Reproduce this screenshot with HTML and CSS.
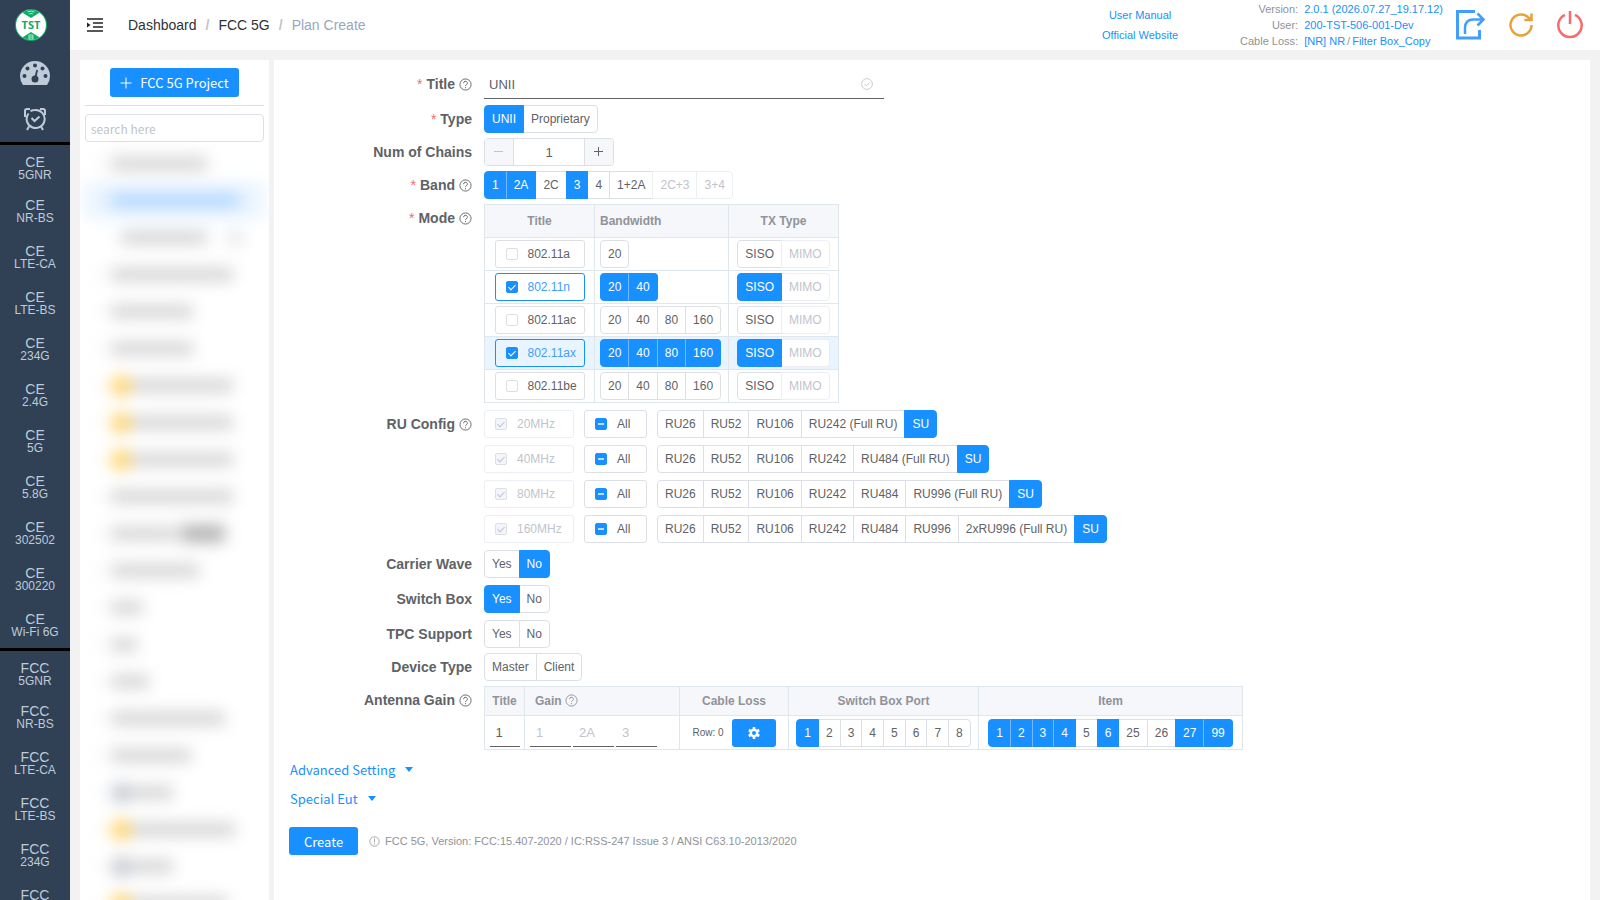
FILE: index.html
```html
<!DOCTYPE html>
<html lang="en">
<head>
<meta charset="utf-8">
<title>Plan Create</title>
<link rel="stylesheet" href="styles.css">
</head>
<body>
<svg class="defs" width="0" height="0" aria-hidden="true">
  <symbol id="help" viewBox="0 0 14 14"><g fill="none" stroke="currentColor"><circle cx="7" cy="7" r="6"/><path d="M5 5.600a2 2 0 1 1 3 1.600q-1 .6-1 1.500M7 9.800v1.200"/></g></symbol>
  <symbol id="info" viewBox="0 0 14 14"><g fill="none" stroke="currentColor"><circle cx="7" cy="7" r="6"/><path d="M7 3.200v5M7 9.400v1.400"/></g></symbol>
</svg>
<div class="app">
  <nav class="side">
    <a class="logo" href="#" aria-label="Home"><svg width="32" height="32" viewBox="0 0 32 32"><defs><clipPath id="disc"><circle cx="16" cy="16" r="15"/></clipPath></defs><circle cx="16" cy="16" r="16" fill="#0fa968"/><circle cx="16" cy="16" r="15" fill="#fff"/><g clip-path="url(#disc)" fill="#0fa968"><path d="M3 0h26l-5 4-8 5-8-5zM3 32h26l-5-4-8-5-8 5z"/></g><path d="M12.500 3q3.500-2 7 0M14 5q2-1 4 0M14 26h4v4h-4zM14 28h4" fill="none" stroke="#b5e6d0"/><text x="16" y="20" text-anchor="middle" class="logo-text">TST</text></svg></a>
    <a class="tool" href="#" aria-label="Dashboard"><svg width="30" height="24" viewBox="0 0 30 24"><path d="M3 24Q0 20 0 15a15 15 0 0 1 30 0q0 5-3 9z" fill="#bfcbd9"/><g fill="#304156"><circle cx="4.500" cy="15" r="2"/><circle cx="7.500" cy="7.500" r="2"/><circle cx="15" cy="4.500" r="2"/><circle cx="22.500" cy="7.500" r="2"/><circle cx="25.500" cy="15" r="2"/><circle cx="15" cy="18" r="3.500"/></g><path d="M15 18l2.200-9" stroke="#304156" stroke-width="1.800"/></svg></a>
    <a class="tool" href="#" aria-label="Schedule"><svg width="22" height="24" viewBox="0 0 22 24" fill="none" stroke="#bfcbd9" stroke-width="2"><path d="M4.500 6.500A9 9 0 1 0 11 3q-2.500 0-4.500 1.200M1 10V4q0-2 2-2h3M16 2h3q2 0 2 2v4M5 19.500l-2 3.500M17 19.500l2 3.500M7.500 11l3 3 5-4.500"/></svg></a>
    <div class="group">
      <a href="#"><b>CE</b>5GNR</a><a href="#"><b>CE</b>NR-BS</a><a href="#"><b>CE</b>LTE-CA</a><a href="#"><b>CE</b>LTE-BS</a><a href="#"><b>CE</b>234G</a><a href="#"><b>CE</b>2.4G</a><a href="#"><b>CE</b>5G</a><a href="#"><b>CE</b>5.8G</a><a href="#"><b>CE</b>302502</a><a href="#"><b>CE</b>300220</a><a href="#"><b>CE</b>Wi-Fi 6G</a>
    </div>
    <div class="group">
      <a href="#"><b>FCC</b>5GNR</a><a href="#"><b>FCC</b>NR-BS</a><a href="#"><b>FCC</b>LTE-CA</a><a href="#"><b>FCC</b>LTE-BS</a><a href="#"><b>FCC</b>234G</a><a href="#"><b>FCC</b></a>
    </div>
  </nav>
  <div class="page">
    <header class="top">
      <button class="plain" type="button" aria-label="Toggle menu"><svg width="16" height="14" viewBox="0 0 16 14"><path d="M0 1h16M6 5h10M6 9h10M0 13h16" stroke="#222" stroke-width="1.500"/><path d="M0 4.500l3.500 2.500L0 9.500z" fill="#222"/></svg></button>
      <div class="crumbs"><a href="#">Dashboard</a><i>/</i><a href="#">FCC 5G</a><i>/</i><span>Plan Create</span></div>
      <div class="docs"><a href="#">User Manual</a><a href="#">Official Website</a></div>
      <dl class="meta"><dt>Version:</dt><dd>2.0.1 (2026.07.27_19.17.12)</dd><dt>User:</dt><dd>200-TST-506-001-Dev</dd><dt>Cable Loss:</dt><dd>[NR] NR<em>/</em>Filter Box_Copy</dd></dl>
      <div class="acts">
        <button class="plain" type="button" aria-label="Share"><svg width="30" height="30" viewBox="0 0 30 30" fill="none" stroke="#409eff"><path d="M19 1.500H1.500v26.500h22V20" stroke-width="3"/><path d="M9 24v-6q0-8.500 8.500-8.500H27M21.500 3.500l6 6-6 6" stroke-width="2.500"/></svg></button>
        <button class="plain" type="button" aria-label="Refresh"><svg width="26" height="26" viewBox="0 0 26 26" fill="none" stroke="#e6a23c" stroke-width="2.500"><path d="M23.500 13A10.500 10.500 0 1 1 20 5.200l3 2M23.500 1.500v6.500h-7"/></svg></button>
        <button class="plain" type="button" aria-label="Log out"><svg width="28" height="30" viewBox="0 0 28 30" fill="none" stroke="#f56c6c" stroke-width="2.500"><path d="M9 4.800A11.700 11.700 0 1 0 19 4.800M14 1v13"/></svg></button>
      </div>
    </header>
    <div class="cols">
      <aside class="tree">
        <button class="primary add" type="button"><svg width="12" height="12" viewBox="0 0 12 12"><path d="M6 .5v11M.5 6h11" stroke="#fff"/></svg>FCC 5G Project</button>
        <div class="find"><input type="text" placeholder="search here" aria-label="search here"></div>
        <ul class="list" aria-hidden="true">
          <li><u></u><s style="width:96px"></s></li>
          <li class="on"><u></u><s style="width:128px"></s></li>
          <li class="sub"><s style="width:86px"></s><q></q></li>
          <li><u></u><s style="width:122px"></s></li>
          <li><u></u><s style="width:82px"></s></li>
          <li><u></u><s style="width:82px"></s></li>
          <li><u></u><em></em><s style="width:102px"></s></li>
          <li><u></u><em></em><s style="width:102px"></s></li>
          <li><u></u><em></em><s style="width:102px"></s></li>
          <li><u></u><s style="width:122px"></s></li>
          <li><u></u><s style="width:66px"></s><s class="dark" style="width:44px"></s></li>
          <li><u></u><s style="width:88px"></s></li>
          <li><u></u><s style="width:32px"></s></li>
          <li><u></u><s style="width:26px"></s></li>
          <li><u></u><s style="width:38px"></s></li>
          <li><u></u><s style="width:114px"></s></li>
          <li><u></u><s style="width:80px"></s></li>
          <li><u></u><em class="slate"></em><s style="width:42px"></s></li>
          <li><u></u><em></em><s style="width:104px"></s></li>
          <li><u></u><em class="slate"></em><s style="width:42px"></s></li>
          <li><u></u><em></em><s style="width:96px"></s></li>
        </ul>
      </aside>
      <main class="main">
        <form class="form">
          <div class="row"><label class="lab req" for="title">Title <svg class="ic"><use href="#help"/></svg></label>
            <div class="title"><input id="title" type="text" value="UNII"><svg width="12" height="12" viewBox="0 0 14 14" fill="none" stroke="#c0c4cc"><circle cx="7" cy="7" r="6.300"/><path d="M4 7l2.300 2.300L10.200 5"/></svg></div></div>
          <div class="row"><span class="lab req" id="l-type">Type</span>
            <div class="opts" role="group" aria-labelledby="l-type"><label><input type="radio" name="type" checked>UNII</label><label><input type="radio" name="type">Proprietary</label></div></div>
          <div class="row"><label class="lab" for="chains">Num of Chains</label>
            <div class="num"><button type="button" disabled aria-label="Decrease"><svg width="10" height="10"><path d="M0 4.500h9" stroke="currentColor"/></svg></button><input id="chains" type="text" value="1"><button type="button" aria-label="Increase"><svg width="10" height="10"><path d="M0 4.500h9M4.500 0v9" stroke="currentColor"/></svg></button></div></div>
          <div class="row"><span class="lab req" id="l-band">Band <svg class="ic"><use href="#help"/></svg></span>
            <div class="opts" role="group" aria-labelledby="l-band"><label><input type="checkbox" checked>1</label><label><input type="checkbox" checked>2A</label><label><input type="checkbox">2C</label><label><input type="checkbox" checked>3</label><label><input type="checkbox">4</label><label><input type="checkbox">1+2A</label><label><input type="checkbox" disabled>2C+3</label><label><input type="checkbox" disabled>3+4</label></div></div>
          <div class="row"><span class="lab req">Mode <svg class="ic"><use href="#help"/></svg></span>
            <table class="grid mode">
              <colgroup><col class="c-side"><col class="c-band"><col class="c-side"></colgroup>
              <thead><tr><th>Title</th><th class="left">Bandwidth</th><th>TX Type</th></tr></thead>
              <tbody>
              <tr><td><label class="box"><input type="checkbox">802.11a</label></td><td class="left"><div class="opts"><label><input type="checkbox">20</label></div></td><td><div class="opts"><label><input type="checkbox">SISO</label><label><input type="checkbox" disabled>MIMO</label></div></td></tr>
              <tr><td><label class="box"><input type="checkbox" checked>802.11n</label></td><td class="left"><div class="opts"><label><input type="checkbox" checked>20</label><label><input type="checkbox" checked>40</label></div></td><td><div class="opts"><label><input type="checkbox" checked>SISO</label><label><input type="checkbox" disabled>MIMO</label></div></td></tr>
              <tr><td><label class="box"><input type="checkbox">802.11ac</label></td><td class="left"><div class="opts"><label><input type="checkbox">20</label><label><input type="checkbox">40</label><label><input type="checkbox">80</label><label><input type="checkbox">160</label></div></td><td><div class="opts"><label><input type="checkbox">SISO</label><label><input type="checkbox" disabled>MIMO</label></div></td></tr>
              <tr class="hot"><td><label class="box"><input type="checkbox" checked>802.11ax</label></td><td class="left"><div class="opts"><label><input type="checkbox" checked>20</label><label><input type="checkbox" checked>40</label><label><input type="checkbox" checked>80</label><label><input type="checkbox" checked>160</label></div></td><td><div class="opts"><label><input type="checkbox" checked>SISO</label><label><input type="checkbox" disabled>MIMO</label></div></td></tr>
              <tr><td><label class="box"><input type="checkbox">802.11be</label></td><td class="left"><div class="opts"><label><input type="checkbox">20</label><label><input type="checkbox">40</label><label><input type="checkbox">80</label><label><input type="checkbox">160</label></div></td><td><div class="opts"><label><input type="checkbox">SISO</label><label><input type="checkbox" disabled>MIMO</label></div></td></tr>
              </tbody>
            </table></div>
          <div class="row ru"><span class="lab">RU Config <svg class="ic"><use href="#help"/></svg></span>
            <div class="stack">
              <div class="line"><label class="box"><input type="checkbox" checked disabled>20MHz</label><label class="box all"><input type="checkbox" class="part">All</label><div class="opts"><label><input type="checkbox">RU26</label><label><input type="checkbox">RU52</label><label><input type="checkbox">RU106</label><label><input type="checkbox">RU242 (Full RU)</label><label><input type="checkbox" checked>SU</label></div></div>
              <div class="line"><label class="box"><input type="checkbox" checked disabled>40MHz</label><label class="box all"><input type="checkbox" class="part">All</label><div class="opts"><label><input type="checkbox">RU26</label><label><input type="checkbox">RU52</label><label><input type="checkbox">RU106</label><label><input type="checkbox">RU242</label><label><input type="checkbox">RU484 (Full RU)</label><label><input type="checkbox" checked>SU</label></div></div>
              <div class="line"><label class="box"><input type="checkbox" checked disabled>80MHz</label><label class="box all"><input type="checkbox" class="part">All</label><div class="opts"><label><input type="checkbox">RU26</label><label><input type="checkbox">RU52</label><label><input type="checkbox">RU106</label><label><input type="checkbox">RU242</label><label><input type="checkbox">RU484</label><label><input type="checkbox">RU996 (Full RU)</label><label><input type="checkbox" checked>SU</label></div></div>
              <div class="line"><label class="box"><input type="checkbox" checked disabled>160MHz</label><label class="box all"><input type="checkbox" class="part">All</label><div class="opts"><label><input type="checkbox">RU26</label><label><input type="checkbox">RU52</label><label><input type="checkbox">RU106</label><label><input type="checkbox">RU242</label><label><input type="checkbox">RU484</label><label><input type="checkbox">RU996</label><label><input type="checkbox">2xRU996 (Full RU)</label><label><input type="checkbox" checked>SU</label></div></div>
            </div></div>
          <div class="row gap"><span class="lab" id="l-cw">Carrier Wave</span>
            <div class="opts" role="group" aria-labelledby="l-cw"><label><input type="radio" name="cw">Yes</label><label><input type="radio" name="cw" checked>No</label></div></div>
          <div class="row gap"><span class="lab" id="l-sb">Switch Box</span>
            <div class="opts" role="group" aria-labelledby="l-sb"><label><input type="radio" name="sb" checked>Yes</label><label><input type="radio" name="sb">No</label></div></div>
          <div class="row"><span class="lab" id="l-tpc">TPC Support</span>
            <div class="opts" role="group" aria-labelledby="l-tpc"><label><input type="radio" name="tpc">Yes</label><label><input type="radio" name="tpc">No</label></div></div>
          <div class="row"><span class="lab" id="l-dt">Device Type</span>
            <div class="opts" role="group" aria-labelledby="l-dt"><label><input type="radio" name="dt">Master</label><label><input type="radio" name="dt">Client</label></div></div>
          <div class="row"><span class="lab">Antenna Gain <svg class="ic"><use href="#help"/></svg></span>
            <table class="grid gain">
              <colgroup><col class="g-title"><col class="g-gain"><col class="g-loss"><col class="g-port"><col class="g-item"></colgroup>
              <thead><tr><th>Title</th><th class="left">Gain <svg class="ic"><use href="#help"/></svg></th><th>Cable Loss</th><th>Switch Box Port</th><th>Item</th></tr></thead>
              <tbody><tr>
                <td><input class="under" type="text" value="1" aria-label="Title"></td>
                <td class="fields"><div class="three"><input class="under" type="text" placeholder="1" aria-label="Gain 1"><input class="under" type="text" placeholder="2A" aria-label="Gain 2A"><input class="under" type="text" placeholder="3" aria-label="Gain 3"></div></td>
                <td><div class="loss">Row: 0<button class="primary gear" type="button" aria-label="Cable loss settings"><svg width="12" height="12" viewBox="0 0 12 12"><path d="M6 0v12M.8 3l10.400 6M.8 9l10.400-6" stroke="#fff" stroke-width="2.600"/><circle cx="6" cy="6" r="3.200" fill="#1890ff" stroke="#fff" stroke-width="2.400"/></svg></button></div></td>
                <td><div class="opts"><label><input type="checkbox" checked>1</label><label><input type="checkbox">2</label><label><input type="checkbox">3</label><label><input type="checkbox">4</label><label><input type="checkbox">5</label><label><input type="checkbox">6</label><label><input type="checkbox">7</label><label><input type="checkbox">8</label></div></td>
                <td><div class="opts"><label><input type="checkbox" checked>1</label><label><input type="checkbox" checked>2</label><label><input type="checkbox" checked>3</label><label><input type="checkbox" checked>4</label><label><input type="checkbox">5</label><label><input type="checkbox" checked>6</label><label><input type="checkbox">25</label><label><input type="checkbox">26</label><label><input type="checkbox" checked>27</label><label><input type="checkbox" checked>99</label></div></td>
              </tr></tbody>
            </table></div>
          <div class="more"><button class="plain" type="button">Advanced Setting<svg width="8" height="5"><path d="M0 0h8L4 5z" fill="currentColor"/></svg></button><button class="plain" type="button">Special Eut<svg width="8" height="5"><path d="M0 0h8L4 5z" fill="currentColor"/></svg></button></div>
          <div class="foot"><button class="primary" type="button">Create</button><svg class="info"><use href="#info"/></svg><span>FCC 5G, Version: FCC:15.407-2020 / IC:RSS-247 Issue 3 / ANSI C63.10-2013/2020</span></div>
        </form>
      </main>
    </div>
  </div>
</div>
</body>
</html>
```
FILE: styles.css
```css
* { box-sizing: border-box; }
body { margin: 0; background: #f2f2f2; color: #606266; font: 12px "Liberation Sans", Arial, sans-serif; }
a { text-decoration: none; color: inherit; }
input, button { font: inherit; color: inherit; margin: 0; }
button { cursor: pointer; }
svg { display: block; flex: none; }
.defs { position: absolute; }
.app { display: flex; height: 100vh; overflow: hidden; }

/* Navigation rail */
.side { width: 70px; flex: none; background: #304156; color: #bfcbd9; overflow: hidden; }
.logo { display: block; padding: 9px 15px; height: 50px; }
.logo-text { font: bold 11px "Open Sans", sans-serif; fill: #0fa968; }
.tool { display: flex; align-items: center; justify-content: center; height: 46px; }
.group { border-top: 3px solid #000; }
.group a { display: block; height: 46px; padding-top: 11px; line-height: 13px; text-align: center; white-space: nowrap; }
.group a:first-child { height: 43px; }
.group b { display: block; font-weight: normal; font-size: 14px; }

/* Header */
.page { flex: 1; min-width: 0; display: flex; flex-direction: column; }
.top { height: 50px; flex: none; display: flex; align-items: center; padding: 0 16px 0 17px; background: #fff; }
.plain { border: 0; background: none; padding: 0; }
.crumbs { margin-left: 25px; font-size: 14px; color: #303133; }
.crumbs i { margin: 0 9px; font-style: normal; font-weight: bold; color: #c0c4cc; }
.crumbs span { color: #97a8be; }
.docs { margin-left: auto; display: flex; flex-direction: column; align-items: center; font-size: 11px; line-height: 20px; color: #1890ff; }
.meta { display: grid; grid-template-columns: auto auto; column-gap: 6px; margin: 0 0 0 62px; font-size: 11px; line-height: 16px; }
.meta dt { text-align: right; color: #909399; }
.meta dd { margin: 0; color: #1890ff; }
.meta em { margin: 0 2px; font-style: normal; color: #909399; }
.acts { display: flex; align-items: center; gap: 22px; margin-left: 13px; }

.cols { flex: 1; min-height: 0; display: flex; gap: 5px; padding: 10px 10px 0; }

/* Project tree */
.tree { width: 189px; flex: none; background: #fff; padding: 8px 5px 0; overflow: hidden; }
.primary { border: 0; border-radius: 3px; background: #1890ff; color: #fff; font: 13px "Noto Sans CJK SC", sans-serif; }
.add { display: flex; align-items: center; gap: 8px; height: 29px; padding: 0 10px; margin: 0 auto; }
.find { margin-top: 8px; padding-top: 8px; border-top: 1px solid #dcdfe6; }
.find input { display: block; width: 100%; height: 28px; padding: 0 5px; border: 1px solid #dcdfe6; border-radius: 4px; font: 12px "Noto Sans CJK SC", sans-serif; }
::placeholder { color: #c0c4cc; opacity: 1; }
.list { list-style: none; margin: 3px 0 0; padding: 0; filter: blur(8px); }
.list li { height: 37px; display: flex; align-items: center; gap: 4px; padding-left: 10px; }
.list li.sub { padding-left: 36px; gap: 22px; }
.list u { width: 6px; height: 6px; margin-right: 6px; background: #f1f1f1; }
.list s { height: 13px; background: #d2d2d2; }
.list q { width: 12px; height: 12px; background: #dadada; }
.list q::before, .list q::after { content: none; }
.list em { width: 20px; height: 20px; margin-right: -4px; border-radius: 10px; background: #ffd05c; }
.list em.slate { background: #c0c5cd; }
.list .dark { height: 17px; background: #b0b0b0; }
.list .on { background: #eaf4ff; }
.list .on s { background: #add4ff; }

/* Form */
.main { flex: 1; min-width: 0; background: #fff; padding: 10px 0 0; overflow: hidden; }
.form { margin: 0; }
.row { display: flex; gap: 12px; margin-bottom: 5px; }
.row.ru { margin-top: 7px; }
.row.ru, .row.gap { margin-bottom: 7px; }
.lab { width: 198px; flex: none; height: 28px; display: flex; align-items: center; justify-content: flex-end; gap: 4px; font-size: 14px; font-weight: bold; }
.req::before { content: "*"; color: #f56c6c; font-weight: normal; }
.ic { width: 13px; height: 13px; }
.title { display: flex; align-items: center; width: 400px; height: 29px; margin-bottom: 1px; padding-right: 11px; border-bottom: 1px solid #606266; }
.title input { flex: 1; border: 0; padding: 0 5px; height: 28px; background: none; outline: 0; font-size: 13px; }

.opts { display: flex; }
.opts label { position: relative; height: 28px; padding: 0 7px; border: 1px solid #dcdfe6; background: #fff; line-height: 26px; white-space: nowrap; }
.opts label + label { margin-left: -1px; }
.opts label:first-child { border-radius: 4px 0 0 4px; }
.opts label:last-child { border-radius: 0 4px 4px 0; }
.opts label:only-child { border-radius: 4px; }
.opts input { position: absolute; inset: 0; opacity: 0; }
.opts label:has(:disabled) { border-color: #ebeef5; color: #c0c4cc; }
.opts label:has(:checked) { background: #1890ff; border-color: #1890ff; color: #fff; z-index: 1; }
.opts label:has(:checked) + label:has(:checked) { border-left-color: #74bcff; }

.num { display: flex; width: 130px; height: 28px; border: 1px solid #dcdfe6; border-radius: 4px; overflow: hidden; }
.num button { width: 28px; border: 0; padding: 0 9px; background: #f5f7fa; }
.num button:disabled { color: #c0c4cc; }
.num input { flex: 1; min-width: 0; border: solid #dcdfe6; border-width: 0 1px; text-align: center; font-size: 13px; }

.box { display: flex; align-items: center; gap: 10px; width: 90px; height: 28px; padding: 0 10px; border: 1px solid #dcdfe6; border-radius: 3px; line-height: 26px; }
.box.all { width: 63px; }
.box input { appearance: none; flex: none; width: 12px; height: 12px; border: 1px solid #dcdfe6; border-radius: 2px; background: #fff; display: grid; place-items: center; }
.box input:checked, .box .part { background-color: #1890ff; border-color: #1890ff; }
.box input:checked::before { content: ""; width: 3px; height: 6px; margin-bottom: 2px; box-sizing: content-box; border: solid #fff; border-width: 0 1px 1px 0; transform: rotate(45deg); }
.box .part::before { content: ""; width: 6px; height: 2px; background: #b9dcff; }
.box:has(:checked) { border-color: #1890ff; color: #409eff; }
.box:has(:disabled) { border-color: #ebeef5; color: #c0c4cc; }
.box input:disabled { background-color: #f2f6fc; border-color: #dcdfe6; }
.box input:disabled::before { border-color: #c0c4cc; }
.stack { display: grid; gap: 7px; }
.line { display: flex; gap: 10px; }

.grid { border-collapse: collapse; table-layout: fixed; }
.grid th, .grid td { border: 1px solid #dfe6ec; padding: 0; }
.grid th { background: #f5f7fa; color: #909399; }
.grid .opts { justify-content: center; }
.grid .left { text-align: left; padding-left: 5px; }
.grid .left .opts { justify-content: flex-start; }
.grid th .ic { display: inline-block; vertical-align: -2px; }
.mode tr { height: 33px; }
.mode .box { margin: 0 auto; }
.c-side { width: 110px; }
.c-band { width: 134px; }
.hot { background: #e8f4ff; }
.gain thead tr { height: 29px; }
.gain tbody tr { height: 34px; }
.g-title { width: 40px; }
.g-gain { width: 155px; }
.g-loss { width: 109px; }
.g-port { width: 190px; }
.g-item { width: 264px; }
.gain .left { padding-left: 10px; }
.under { display: block; width: 30px; height: 28px; margin: 0 auto; border: 0; border-bottom: 1px solid #606266; padding: 0 6px; background: none; font-size: 13px; }
.three { display: flex; gap: 2px; padding-left: 5px; }
.three .under { width: 41px; margin: 0; }
.loss { display: flex; align-items: center; justify-content: center; gap: 8px; font-size: 10px; }
.gear { width: 44px; height: 28px; padding: 0 16px; }

.more { display: flex; flex-direction: column; align-items: flex-start; padding: 0 0 0 16px; color: #1890ff; font: 13px "Noto Sans CJK SC", sans-serif; }
.more button { display: flex; align-items: center; gap: 10px; height: 29px; }
.foot { display: flex; align-items: center; padding: 14px 15px 0; font-size: 11px; color: #909399; }
.foot .primary { width: 69px; height: 28px; margin-right: 11px; }
.info { width: 11px; height: 11px; margin-right: 5px; }
```
